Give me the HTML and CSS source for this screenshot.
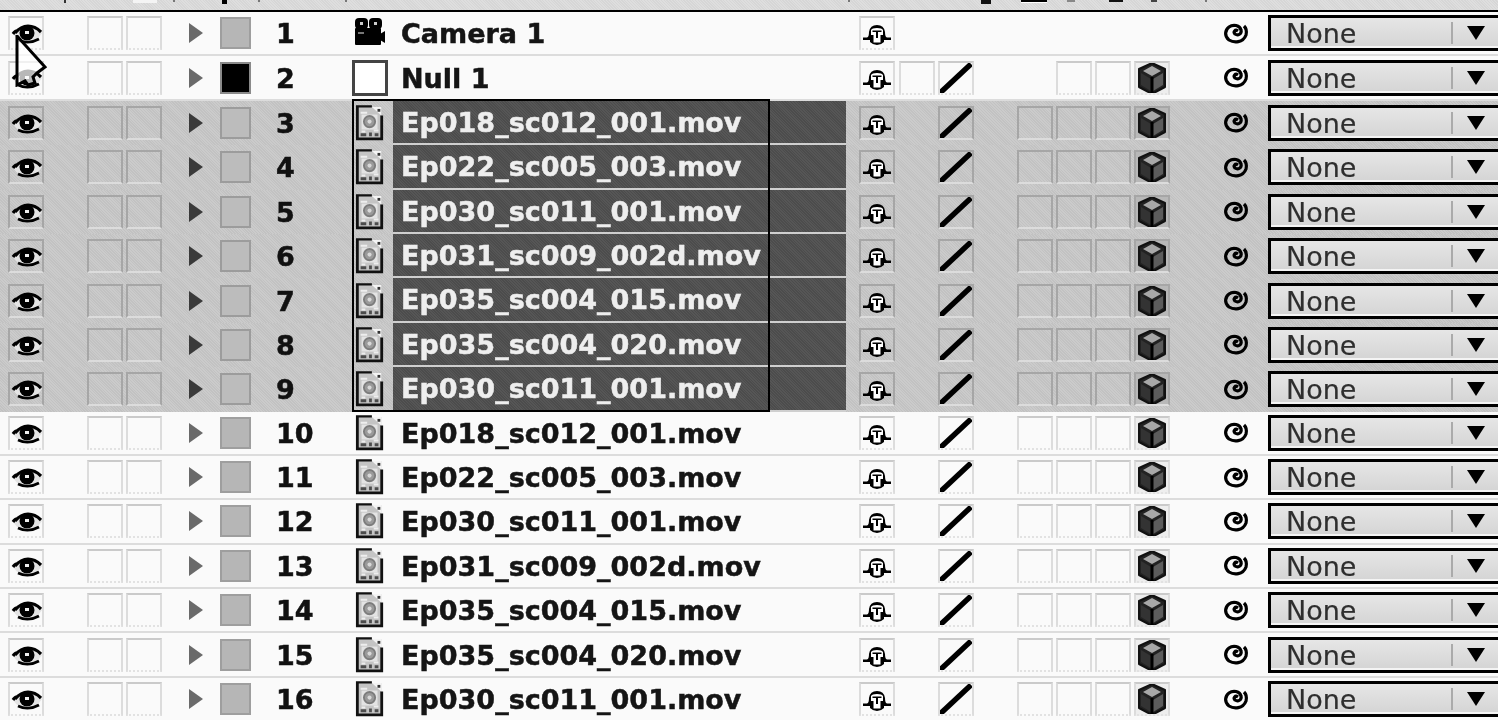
FILE: index.html
```html
<!DOCTYPE html>
<html lang="en">
<head>
  <meta charset="UTF-8">
  <title>Timeline layers</title>
  <link rel="stylesheet" href="styles.css">
</head>
<body>

  <!-- Icon sprites -->
  <svg class="sprites" xmlns="http://www.w3.org/2000/svg">
    <symbol id="eye" viewBox="0 0 32 30">
      <path d="M3 16 Q10 7 18 7 Q26 7 32 15 Q26 24 18 25 Q9 25 3 16Z" fill="#e4e4e4"/>
      <path d="M3 16 Q5 13 6 13 M5 15 Q11 8 18 8 Q25 8 31 14" fill="none" stroke="#000" stroke-width="3.2"/>
      <circle cx="17" cy="15" r="7.5" fill="#000"/>
      <rect x="15" y="13" width="4" height="3" fill="#eee"/>
      <path d="M8 22 Q18 27 29 21" fill="none" stroke="#000" stroke-width="2.6"/>
    </symbol>
    <symbol id="shy" viewBox="0 0 32 30">
      <path d="M2 19.5 H6 Q8 19 8 14 Q9 7 16 7 Q23 7 24 14 Q24 19 26 19.5 H30 V22 H23 V24 Q20 27 16 27 Q12 27 9 24 V22 H2Z" fill="#000"/>
      <path d="M10 12 Q11 10 16 10 Q21 10 22 12 V17 H19.5 V24.5 H12.5 V17 H10Z" fill="#fff"/>
      <path d="M11.5 12.5 H20.5 V14 H17 V20 H15 V14 H11.5Z" fill="#000"/>
    </symbol>
    <symbol id="slash" viewBox="0 0 32 30">
      <path d="M0 30 L31 1" stroke="#000" stroke-width="5.4" fill="none"/>
    </symbol>
    <symbol id="cube" viewBox="0 0 32 30">
      <path d="M16 0 L29 6 V24 L16 31 L3 24 V6Z" fill="#222" stroke="#111" stroke-width="2" stroke-linejoin="round"/>
      <path d="M5 10 L15 16 V28 L5 22Z" fill="#333"/>
      <path d="M27 10 L17 16 V28 L27 22Z" fill="#5c5c5c"/>
      <path d="M16 3 L25 8 L16 13 L7 8Z" fill="#a8a8a8"/>
      <path d="M16 14 V30" stroke="#000" stroke-width="3" fill="none"/>
    </symbol>
    <symbol id="spiral" viewBox="0 0 28 28">
      <path d="M16 13 C13 11 11 14 13 16 C16 18 20 16 19 12 C18 7 11 6 7 9 C3 12 2 18 7 22 C12 25 21 25 24 17 C25 13 24 10 22 8" fill="none" stroke="#000" stroke-width="3.2"/>
    </symbol>
    <symbol id="twirl" viewBox="0 0 14 20">
      <path d="M0 0 L14 10 L0 20Z"/>
    </symbol>
    <symbol id="camera" viewBox="0 0 32 28">
      <rect x="1" y="0" width="13" height="11" rx="4" fill="#000"/>
      <rect x="15" y="0" width="13" height="11" rx="4" fill="#000"/>
      <rect x="6" y="4" width="3" height="3" fill="#ccc"/>
      <rect x="20" y="4" width="3" height="3" fill="#ccc"/>
      <rect x="1" y="10" width="26" height="17" rx="1" fill="#000"/>
      <path d="M26 16 L31 13 V25 L26 22Z" fill="#000"/>
      <rect x="4" y="14" width="6" height="2" fill="#777"/>
    </symbol>
    <symbol id="footage" viewBox="0 0 32 38">
      <rect x="3" y="2" width="25" height="34" fill="#c4c4c4"/>
      <path d="M18 2 L28 11 V2Z" fill="#f4f4f4"/>
      <path d="M6 7 h7 v2 h-7z M7 27 h4 v2 h-4z M20 26 h5 v2 h-5z" fill="#eee"/>
      <rect x="7" y="10" width="17" height="16" fill="#e4e4e4"/>
      <circle cx="15.5" cy="17.5" r="6" fill="#9a9a9a" stroke="#7c7c7c" stroke-width="2"/>
      <circle cx="15.5" cy="17.5" r="2.2" fill="#d8d8d8"/>
      <path d="M6 30 h6 v3 h-6z M15 29 h3 v4 h-3z M21 30 h4 v3 h-4z" fill="#4c4c4c"/>
      <path d="M1 0 H18 V2.5 H4 V34.5 H27 V11 H30 V37.5 H1Z" fill="#111"/>
      <rect x="24" y="4" width="3" height="3" fill="#333"/>
    </symbol>
    <symbol id="caret" viewBox="0 0 18 14">
      <path d="M0 0 H18 L9 14Z" fill="#000"/>
    </symbol>
    <symbol id="cursor" viewBox="0 0 34 52">
      <path d="M2 1 V50 L10 46 L13 50 L20 48 L18 42 L22 38 L30 32Z" fill="#fff" fill-opacity=".72" stroke="#000" stroke-width="3"/>
    </symbol>
  </svg>

  <!-- Header strip -->
  <div class="header">
    <span class="mark mark-a"></span><span class="mark mark-b"></span><span class="mark mark-c"></span>
    <span class="mark mark-d"></span><span class="mark mark-e"></span><span class="mark mark-f"></span>
    <span class="mark mark-g"></span><span class="mark mark-h"></span><span class="mark mark-i"></span>
    <span class="mark mark-j"></span><span class="mark mark-k"></span><span class="mark mark-l"></span>
    <span class="mark mark-m"></span>
  </div>

  <!-- Layers -->
  <div class="layers">

    <div class="row">
      <span class="box c-eye"><svg class="ic"><use href="#eye"/></svg></span>
      <span class="box c-s1"></span><span class="box c-s2"></span>
      <svg class="twirl c-tw"><use href="#twirl"/></svg>
      <span class="label c-lb"></span><span class="num c-no">1</span>
      <svg class="camera c-ic"><use href="#camera"/></svg>
      <span class="name c-nm">Camera 1</span>
      <span class="box c-a"><svg class="ic"><use href="#shy"/></svg></span>
      <svg class="spiral c-sp"><use href="#spiral"/></svg>
      <span class="drop c-dd"><span class="drop-text">None</span><svg class="caret"><use href="#caret"/></svg></span>
    </div>

    <div class="row">
      <span class="box c-eye"><svg class="ic"><use href="#eye"/></svg></span>
      <span class="box c-s1"></span><span class="box c-s2"></span>
      <svg class="twirl c-tw"><use href="#twirl"/></svg>
      <span class="label label-black c-lb"></span><span class="num c-no">2</span>
      <span class="null-icon c-ic"></span>
      <span class="name c-nm">Null 1</span>
      <span class="box c-a"><svg class="ic"><use href="#shy"/></svg></span>
      <span class="box c-b"></span>
      <span class="box c-c"><svg class="ic"><use href="#slash"/></svg></span>
      <span class="box c-e"></span><span class="box c-f"></span>
      <span class="box box-cube c-g"><svg class="ic"><use href="#cube"/></svg></span>
      <svg class="spiral c-sp"><use href="#spiral"/></svg>
      <span class="drop c-dd"><span class="drop-text">None</span><svg class="caret"><use href="#caret"/></svg></span>
    </div>

    <div class="row selected">
      <span class="box c-eye"><svg class="ic"><use href="#eye"/></svg></span>
      <span class="box c-s1"></span><span class="box c-s2"></span>
      <svg class="twirl c-tw"><use href="#twirl"/></svg>
      <span class="label c-lb"></span><span class="num c-no">3</span>
      <svg class="footage c-ic"><use href="#footage"/></svg>
      <span class="name c-nm">Ep018_sc012_001.mov</span>
      <span class="box c-a"><svg class="ic"><use href="#shy"/></svg></span>
      <span class="box c-c"><svg class="ic"><use href="#slash"/></svg></span>
      <span class="box c-d"></span><span class="box c-e"></span><span class="box c-f"></span>
      <span class="box box-cube c-g"><svg class="ic"><use href="#cube"/></svg></span>
      <svg class="spiral c-sp"><use href="#spiral"/></svg>
      <span class="drop c-dd"><span class="drop-text">None</span><svg class="caret"><use href="#caret"/></svg></span>
    </div>

    <div class="row selected">
      <span class="box c-eye"><svg class="ic"><use href="#eye"/></svg></span>
      <span class="box c-s1"></span><span class="box c-s2"></span>
      <svg class="twirl c-tw"><use href="#twirl"/></svg>
      <span class="label c-lb"></span><span class="num c-no">4</span>
      <svg class="footage c-ic"><use href="#footage"/></svg>
      <span class="name c-nm">Ep022_sc005_003.mov</span>
      <span class="box c-a"><svg class="ic"><use href="#shy"/></svg></span>
      <span class="box c-c"><svg class="ic"><use href="#slash"/></svg></span>
      <span class="box c-d"></span><span class="box c-e"></span><span class="box c-f"></span>
      <span class="box box-cube c-g"><svg class="ic"><use href="#cube"/></svg></span>
      <svg class="spiral c-sp"><use href="#spiral"/></svg>
      <span class="drop c-dd"><span class="drop-text">None</span><svg class="caret"><use href="#caret"/></svg></span>
    </div>

    <div class="row selected">
      <span class="box c-eye"><svg class="ic"><use href="#eye"/></svg></span>
      <span class="box c-s1"></span><span class="box c-s2"></span>
      <svg class="twirl c-tw"><use href="#twirl"/></svg>
      <span class="label c-lb"></span><span class="num c-no">5</span>
      <svg class="footage c-ic"><use href="#footage"/></svg>
      <span class="name c-nm">Ep030_sc011_001.mov</span>
      <span class="box c-a"><svg class="ic"><use href="#shy"/></svg></span>
      <span class="box c-c"><svg class="ic"><use href="#slash"/></svg></span>
      <span class="box c-d"></span><span class="box c-e"></span><span class="box c-f"></span>
      <span class="box box-cube c-g"><svg class="ic"><use href="#cube"/></svg></span>
      <svg class="spiral c-sp"><use href="#spiral"/></svg>
      <span class="drop c-dd"><span class="drop-text">None</span><svg class="caret"><use href="#caret"/></svg></span>
    </div>

    <div class="row selected">
      <span class="box c-eye"><svg class="ic"><use href="#eye"/></svg></span>
      <span class="box c-s1"></span><span class="box c-s2"></span>
      <svg class="twirl c-tw"><use href="#twirl"/></svg>
      <span class="label c-lb"></span><span class="num c-no">6</span>
      <svg class="footage c-ic"><use href="#footage"/></svg>
      <span class="name c-nm">Ep031_sc009_002d.mov</span>
      <span class="box c-a"><svg class="ic"><use href="#shy"/></svg></span>
      <span class="box c-c"><svg class="ic"><use href="#slash"/></svg></span>
      <span class="box c-d"></span><span class="box c-e"></span><span class="box c-f"></span>
      <span class="box box-cube c-g"><svg class="ic"><use href="#cube"/></svg></span>
      <svg class="spiral c-sp"><use href="#spiral"/></svg>
      <span class="drop c-dd"><span class="drop-text">None</span><svg class="caret"><use href="#caret"/></svg></span>
    </div>

    <div class="row selected">
      <span class="box c-eye"><svg class="ic"><use href="#eye"/></svg></span>
      <span class="box c-s1"></span><span class="box c-s2"></span>
      <svg class="twirl c-tw"><use href="#twirl"/></svg>
      <span class="label c-lb"></span><span class="num c-no">7</span>
      <svg class="footage c-ic"><use href="#footage"/></svg>
      <span class="name c-nm">Ep035_sc004_015.mov</span>
      <span class="box c-a"><svg class="ic"><use href="#shy"/></svg></span>
      <span class="box c-c"><svg class="ic"><use href="#slash"/></svg></span>
      <span class="box c-d"></span><span class="box c-e"></span><span class="box c-f"></span>
      <span class="box box-cube c-g"><svg class="ic"><use href="#cube"/></svg></span>
      <svg class="spiral c-sp"><use href="#spiral"/></svg>
      <span class="drop c-dd"><span class="drop-text">None</span><svg class="caret"><use href="#caret"/></svg></span>
    </div>

    <div class="row selected">
      <span class="box c-eye"><svg class="ic"><use href="#eye"/></svg></span>
      <span class="box c-s1"></span><span class="box c-s2"></span>
      <svg class="twirl c-tw"><use href="#twirl"/></svg>
      <span class="label c-lb"></span><span class="num c-no">8</span>
      <svg class="footage c-ic"><use href="#footage"/></svg>
      <span class="name c-nm">Ep035_sc004_020.mov</span>
      <span class="box c-a"><svg class="ic"><use href="#shy"/></svg></span>
      <span class="box c-c"><svg class="ic"><use href="#slash"/></svg></span>
      <span class="box c-d"></span><span class="box c-e"></span><span class="box c-f"></span>
      <span class="box box-cube c-g"><svg class="ic"><use href="#cube"/></svg></span>
      <svg class="spiral c-sp"><use href="#spiral"/></svg>
      <span class="drop c-dd"><span class="drop-text">None</span><svg class="caret"><use href="#caret"/></svg></span>
    </div>

    <div class="row selected">
      <span class="box c-eye"><svg class="ic"><use href="#eye"/></svg></span>
      <span class="box c-s1"></span><span class="box c-s2"></span>
      <svg class="twirl c-tw"><use href="#twirl"/></svg>
      <span class="label c-lb"></span><span class="num c-no">9</span>
      <svg class="footage c-ic"><use href="#footage"/></svg>
      <span class="name c-nm">Ep030_sc011_001.mov</span>
      <span class="box c-a"><svg class="ic"><use href="#shy"/></svg></span>
      <span class="box c-c"><svg class="ic"><use href="#slash"/></svg></span>
      <span class="box c-d"></span><span class="box c-e"></span><span class="box c-f"></span>
      <span class="box box-cube c-g"><svg class="ic"><use href="#cube"/></svg></span>
      <svg class="spiral c-sp"><use href="#spiral"/></svg>
      <span class="drop c-dd"><span class="drop-text">None</span><svg class="caret"><use href="#caret"/></svg></span>
    </div>

    <div class="row">
      <span class="box c-eye"><svg class="ic"><use href="#eye"/></svg></span>
      <span class="box c-s1"></span><span class="box c-s2"></span>
      <svg class="twirl c-tw"><use href="#twirl"/></svg>
      <span class="label c-lb"></span><span class="num c-no">10</span>
      <svg class="footage c-ic"><use href="#footage"/></svg>
      <span class="name c-nm">Ep018_sc012_001.mov</span>
      <span class="box c-a"><svg class="ic"><use href="#shy"/></svg></span>
      <span class="box c-c"><svg class="ic"><use href="#slash"/></svg></span>
      <span class="box c-d"></span><span class="box c-e"></span><span class="box c-f"></span>
      <span class="box box-cube c-g"><svg class="ic"><use href="#cube"/></svg></span>
      <svg class="spiral c-sp"><use href="#spiral"/></svg>
      <span class="drop c-dd"><span class="drop-text">None</span><svg class="caret"><use href="#caret"/></svg></span>
    </div>

    <div class="row">
      <span class="box c-eye"><svg class="ic"><use href="#eye"/></svg></span>
      <span class="box c-s1"></span><span class="box c-s2"></span>
      <svg class="twirl c-tw"><use href="#twirl"/></svg>
      <span class="label c-lb"></span><span class="num c-no">11</span>
      <svg class="footage c-ic"><use href="#footage"/></svg>
      <span class="name c-nm">Ep022_sc005_003.mov</span>
      <span class="box c-a"><svg class="ic"><use href="#shy"/></svg></span>
      <span class="box c-c"><svg class="ic"><use href="#slash"/></svg></span>
      <span class="box c-d"></span><span class="box c-e"></span><span class="box c-f"></span>
      <span class="box box-cube c-g"><svg class="ic"><use href="#cube"/></svg></span>
      <svg class="spiral c-sp"><use href="#spiral"/></svg>
      <span class="drop c-dd"><span class="drop-text">None</span><svg class="caret"><use href="#caret"/></svg></span>
    </div>

    <div class="row">
      <span class="box c-eye"><svg class="ic"><use href="#eye"/></svg></span>
      <span class="box c-s1"></span><span class="box c-s2"></span>
      <svg class="twirl c-tw"><use href="#twirl"/></svg>
      <span class="label c-lb"></span><span class="num c-no">12</span>
      <svg class="footage c-ic"><use href="#footage"/></svg>
      <span class="name c-nm">Ep030_sc011_001.mov</span>
      <span class="box c-a"><svg class="ic"><use href="#shy"/></svg></span>
      <span class="box c-c"><svg class="ic"><use href="#slash"/></svg></span>
      <span class="box c-d"></span><span class="box c-e"></span><span class="box c-f"></span>
      <span class="box box-cube c-g"><svg class="ic"><use href="#cube"/></svg></span>
      <svg class="spiral c-sp"><use href="#spiral"/></svg>
      <span class="drop c-dd"><span class="drop-text">None</span><svg class="caret"><use href="#caret"/></svg></span>
    </div>

    <div class="row">
      <span class="box c-eye"><svg class="ic"><use href="#eye"/></svg></span>
      <span class="box c-s1"></span><span class="box c-s2"></span>
      <svg class="twirl c-tw"><use href="#twirl"/></svg>
      <span class="label c-lb"></span><span class="num c-no">13</span>
      <svg class="footage c-ic"><use href="#footage"/></svg>
      <span class="name c-nm">Ep031_sc009_002d.mov</span>
      <span class="box c-a"><svg class="ic"><use href="#shy"/></svg></span>
      <span class="box c-c"><svg class="ic"><use href="#slash"/></svg></span>
      <span class="box c-d"></span><span class="box c-e"></span><span class="box c-f"></span>
      <span class="box box-cube c-g"><svg class="ic"><use href="#cube"/></svg></span>
      <svg class="spiral c-sp"><use href="#spiral"/></svg>
      <span class="drop c-dd"><span class="drop-text">None</span><svg class="caret"><use href="#caret"/></svg></span>
    </div>

    <div class="row">
      <span class="box c-eye"><svg class="ic"><use href="#eye"/></svg></span>
      <span class="box c-s1"></span><span class="box c-s2"></span>
      <svg class="twirl c-tw"><use href="#twirl"/></svg>
      <span class="label c-lb"></span><span class="num c-no">14</span>
      <svg class="footage c-ic"><use href="#footage"/></svg>
      <span class="name c-nm">Ep035_sc004_015.mov</span>
      <span class="box c-a"><svg class="ic"><use href="#shy"/></svg></span>
      <span class="box c-c"><svg class="ic"><use href="#slash"/></svg></span>
      <span class="box c-d"></span><span class="box c-e"></span><span class="box c-f"></span>
      <span class="box box-cube c-g"><svg class="ic"><use href="#cube"/></svg></span>
      <svg class="spiral c-sp"><use href="#spiral"/></svg>
      <span class="drop c-dd"><span class="drop-text">None</span><svg class="caret"><use href="#caret"/></svg></span>
    </div>

    <div class="row">
      <span class="box c-eye"><svg class="ic"><use href="#eye"/></svg></span>
      <span class="box c-s1"></span><span class="box c-s2"></span>
      <svg class="twirl c-tw"><use href="#twirl"/></svg>
      <span class="label c-lb"></span><span class="num c-no">15</span>
      <svg class="footage c-ic"><use href="#footage"/></svg>
      <span class="name c-nm">Ep035_sc004_020.mov</span>
      <span class="box c-a"><svg class="ic"><use href="#shy"/></svg></span>
      <span class="box c-c"><svg class="ic"><use href="#slash"/></svg></span>
      <span class="box c-d"></span><span class="box c-e"></span><span class="box c-f"></span>
      <span class="box box-cube c-g"><svg class="ic"><use href="#cube"/></svg></span>
      <svg class="spiral c-sp"><use href="#spiral"/></svg>
      <span class="drop c-dd"><span class="drop-text">None</span><svg class="caret"><use href="#caret"/></svg></span>
    </div>

    <div class="row">
      <span class="box c-eye"><svg class="ic"><use href="#eye"/></svg></span>
      <span class="box c-s1"></span><span class="box c-s2"></span>
      <svg class="twirl c-tw"><use href="#twirl"/></svg>
      <span class="label c-lb"></span><span class="num c-no">16</span>
      <svg class="footage c-ic"><use href="#footage"/></svg>
      <span class="name c-nm">Ep030_sc011_001.mov</span>
      <span class="box c-a"><svg class="ic"><use href="#shy"/></svg></span>
      <span class="box c-c"><svg class="ic"><use href="#slash"/></svg></span>
      <span class="box c-d"></span><span class="box c-e"></span><span class="box c-f"></span>
      <span class="box box-cube c-g"><svg class="ic"><use href="#cube"/></svg></span>
      <svg class="spiral c-sp"><use href="#spiral"/></svg>
      <span class="drop c-dd"><span class="drop-text">None</span><svg class="caret"><use href="#caret"/></svg></span>
    </div>

    <!-- Selection frame and mouse pointer sit over the rows -->
    <div class="sel-frame"></div>
    <svg class="pointer"><use href="#cursor"/></svg>
  </div>

</body>
</html>
```

FILE: styles.css
```css
html, body {
  height: 100%;
  overflow: hidden;
}

body {
  margin: 0;
  background-color: #fafafa;
  color: #000;
  font-family: "DejaVu Sans", sans-serif;
  filter: blur(0.5px);
}

.sprites {
  display: none;
}

/* Header strip */
.header {
  display: grid;
  grid-template-columns: 64px 2px 67px 24px 16px 2px 47px 5px 31px 2px 85px 2px 501px 2px 131px 10px 30px 26px 20px 8px 34px 14px 28px 6px 48px 2px;
  height: 10px;
  background-color: #dadada;
  background-image: repeating-linear-gradient(45deg, #d6d6d6 0 1px, #dedede 1px 2px);
  border-bottom: 2px solid #000;
  align-items: start;
}

.mark {
  height: 2px;
  background-color: #777;
}

.mark-a { grid-column: 2; height: 3px; background-color: #333; }
.mark-b { grid-column: 4; height: 3px; background-color: #f4f4f4; }
.mark-c { grid-column: 6; }
.mark-d { grid-column: 8; height: 4px; background-color: #000; }
.mark-e { grid-column: 10; }
.mark-f { grid-column: 12; }
.mark-g { grid-column: 14; }
.mark-h { grid-column: 16; height: 4px; background-color: #111; }
.mark-i { grid-column: 18; height: 2px; background-color: #000; box-shadow: 0 1px 0 #fff; }
.mark-j { grid-column: 20; height: 2px; background-color: #888; }
.mark-k { grid-column: 22; height: 2px; background-color: #111; }
.mark-l { grid-column: 24; height: 2px; background-color: #444; }
.mark-m { grid-column: 26; }

/* Layer rows */
.layers {
  position: relative;
}

.row {
  display: grid;
  grid-template-columns:
    8px [eye] 36px 43px [s1] 36px 3px [s2] 36px 27px [tw] 14px 17px [lb] 31px 25px [no] 76px
    [ic] 41px [nm] 453px 13px [a] 36px 4px [b] 36px 3px [c] 36px 43px [d] 36px 3px [e] 36px 3px [f] 36px 3px [g] 36px
    52px [sp] 28px 18px [dd] 232px;
  grid-template-rows: minmax(0, 1fr);
  align-items: center;
  box-sizing: border-box;
  height: 44.4px;
  width: 1500px;
  background-color: #fafafa;
  border-bottom: 2px solid #dcdcdc;
}

.row.selected {
  background-color: #c6c6c6;
  background-image: repeating-linear-gradient(45deg, #c2c2c2 0 1px, #cbcbcb 1px 2px);
  border-bottom: 0;
}

.c-eye { grid-column: eye; grid-row: 1; }
.c-s1 { grid-column: s1; grid-row: 1; }
.c-s2 { grid-column: s2; grid-row: 1; }
.c-tw { grid-column: tw; grid-row: 1; }
.c-lb { grid-column: lb; grid-row: 1; }
.c-no { grid-column: no; grid-row: 1; }
.c-ic { grid-column: ic; grid-row: 1; }
.c-nm { grid-column: nm; grid-row: 1; }
.c-a { grid-column: a; grid-row: 1; }
.c-b { grid-column: b; grid-row: 1; }
.c-c { grid-column: c; grid-row: 1; }
.c-d { grid-column: d; grid-row: 1; }
.c-e { grid-column: e; grid-row: 1; }
.c-f { grid-column: f; grid-row: 1; }
.c-g { grid-column: g; grid-row: 1; }
.c-sp { grid-column: sp; grid-row: 1; }
.c-dd { grid-column: dd; grid-row: 1; }

.box {
  display: block;
  box-sizing: border-box;
  width: 36px;
  height: 34px;
  border: 2px solid #dcdcdc;
  border-top-color: #cacaca;
  border-bottom: 2px dotted #e2e2e2;
}

.selected .box {
  border-color: #a6a6a6;
  border-bottom: 2px solid #dcdcdc;
}

.box-cube {
  background-color: #eee;
}

.selected .box-cube {
  background-color: #b8b8b8;
}

.ic {
  display: block;
  width: 32px;
  height: 30px;
  overflow: visible;
}

.twirl {
  width: 14px;
  height: 20px;
  fill: #6a6a6a;
}

.selected .twirl {
  fill: #3a3a3a;
}

.label {
  display: block;
  box-sizing: border-box;
  width: 31px;
  height: 32px;
  background-color: #b6b6b6;
  border: 2px solid #9e9e9e;
}

.selected .label {
  background-color: #bcbcbc;
  border-color: #9c9c9c;
}

.label-black {
  background-color: #000;
  border-color: #8a8a8a;
}

.num, .name {
  padding-top: 2px;
  font-size: 27px;
  font-weight: bold;
  line-height: 34px;
  white-space: nowrap;
  -webkit-text-stroke: 0.5px currentColor;
}

.num {
  color: #111;
}

.name {
  box-sizing: border-box;
  padding-left: 8px;
  color: #151515;
}

.selected .name {
  align-self: stretch;
  line-height: 40px;
  background-color: #505050;
  background-image: repeating-linear-gradient(45deg, #4c4c4c 0 1px, #565656 1px 2px);
  border-bottom: 2px solid #cfcfcf;
  color: #eee;
}

.camera {
  width: 32px;
  height: 28px;
  margin-left: 2px;
  margin-top: -2px;
}

.footage {
  width: 30px;
  height: 36px;
  margin-left: 3px;
}

.null-icon {
  display: block;
  box-sizing: border-box;
  width: 36px;
  height: 36px;
  background-color: #fff;
  border: 3px solid #444;
}

.spiral {
  width: 28px;
  height: 28px;
  margin-top: -3px;
}

/* Parent dropdown */
.drop {
  display: flex;
  align-items: center;
  box-sizing: border-box;
  height: 36px;
  padding-left: 15px;
  border: 3px solid #000;
  border-right: 0;
  background-color: #dcdcdc;
  background-image: linear-gradient(#e6e6e6, #d4d4d4);
  box-shadow: inset 0 -2px 0 #f4f4f4;
}

.drop-text {
  width: 165px;
  height: 22px;
  font-size: 27px;
  line-height: 24px;
  color: #2e2e2e;
  border-right: 2px solid #aaa;
  -webkit-text-stroke: 0.2px currentColor;
}

.caret {
  width: 18px;
  height: 14px;
  margin-left: 14px;
}

/* Overlays */
.sel-frame {
  position: absolute;
  top: 87px;
  left: 352px;
  box-sizing: border-box;
  width: 418px;
  height: 313px;
  border: 2.5px solid #000;
  pointer-events: none;
}

.pointer {
  position: absolute;
  top: 23px;
  left: 15px;
  width: 34px;
  height: 52px;
  overflow: visible;
}
```
